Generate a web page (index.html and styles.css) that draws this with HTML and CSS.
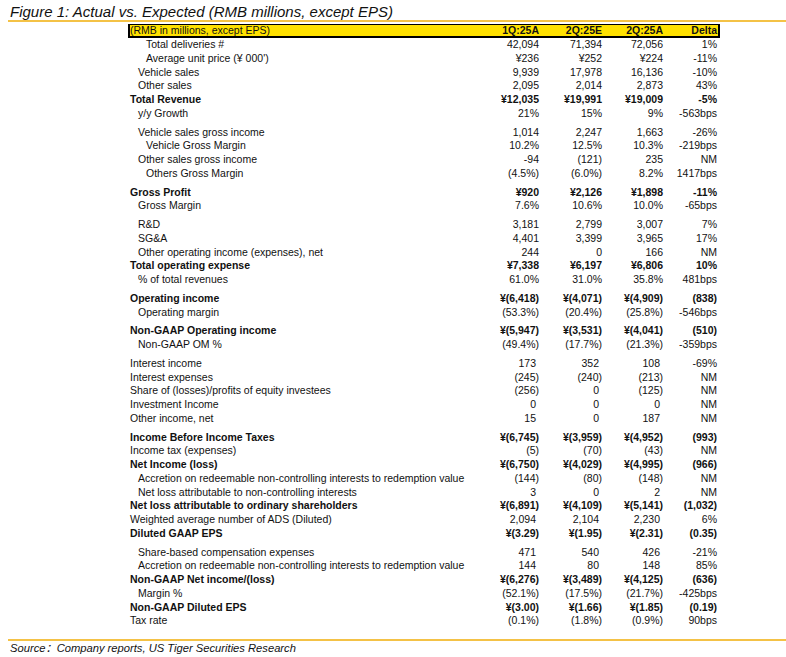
FILE: index.html
```html
<!DOCTYPE html>
<html>
<head>
<meta charset="utf-8">
<link rel="stylesheet" href="styles.css">
</head>
<body>
<div class="fig-title">Figure 1: Actual vs. Expected (RMB millions, except EPS)</div>
<div class="tbl">
  <div class="row head"><span class="lbl">(RMB in millions, except EPS)</span><span>1Q:25A</span><span>2Q:25E</span><span>2Q:25A</span><span>Delta</span></div>

  <div class="row"><span class="lbl l2">Total deliveries #</span><span>42,094</span><span>71,394</span><span>72,056</span><span>1%</span></div>
  <div class="row"><span class="lbl l2">Average unit price (¥ 000')</span><span>¥236</span><span>¥252</span><span>¥224</span><span>-11%</span></div>
  <div class="row"><span class="lbl l1">Vehicle sales</span><span>9,939</span><span>17,978</span><span>16,136</span><span>-10%</span></div>
  <div class="row"><span class="lbl l1">Other sales</span><span>2,095</span><span>2,014</span><span>2,873</span><span>43%</span></div>
  <div class="row b"><span class="lbl">Total Revenue</span><span>¥12,035</span><span>¥19,991</span><span>¥19,009</span><span>-5%</span></div>
  <div class="row"><span class="lbl l1">y/y Growth</span><span>21%</span><span>15%</span><span>9%</span><span>-563bps</span></div>

  <div class="row gap"><span class="lbl l1">Vehicle sales gross income</span><span>1,014</span><span>2,247</span><span>1,663</span><span>-26%</span></div>
  <div class="row"><span class="lbl l2">Vehicle Gross Margin</span><span>10.2%</span><span>12.5%</span><span>10.3%</span><span>-219bps</span></div>
  <div class="row"><span class="lbl l1">Other sales gross income</span><span>-94</span><span>(121)</span><span>235</span><span>NM</span></div>
  <div class="row"><span class="lbl l2">Others Gross Margin</span><span>(4.5%)</span><span>(6.0%)</span><span>8.2%</span><span>1417bps</span></div>

  <div class="row gap b"><span class="lbl">Gross Profit</span><span>¥920</span><span>¥2,126</span><span>¥1,898</span><span>-11%</span></div>
  <div class="row"><span class="lbl l1">Gross Margin</span><span>7.6%</span><span>10.6%</span><span>10.0%</span><span>-65bps</span></div>

  <div class="row gap"><span class="lbl l1">R&amp;D</span><span>3,181</span><span>2,799</span><span>3,007</span><span>7%</span></div>
  <div class="row"><span class="lbl l1">SG&amp;A</span><span>4,401</span><span>3,399</span><span>3,965</span><span>17%</span></div>
  <div class="row"><span class="lbl l1">Other operating income (expenses), net</span><span>244</span><span>0</span><span>166</span><span>NM</span></div>
  <div class="row b"><span class="lbl">Total operating expense</span><span>¥7,338</span><span>¥6,197</span><span>¥6,806</span><span>10%</span></div>
  <div class="row"><span class="lbl l1">% of total revenues</span><span>61.0%</span><span>31.0%</span><span>35.8%</span><span>481bps</span></div>

  <div class="row gap b"><span class="lbl">Operating income</span><span>¥(6,418)</span><span>¥(4,071)</span><span>¥(4,909)</span><span>(838)</span></div>
  <div class="row"><span class="lbl l1">Operating margin</span><span>(53.3%)</span><span>(20.4%)</span><span>(25.8%)</span><span>-546bps</span></div>

  <div class="row gap b"><span class="lbl">Non-GAAP Operating income</span><span>¥(5,947)</span><span>¥(3,531)</span><span>¥(4,041)</span><span>(510)</span></div>
  <div class="row"><span class="lbl l1">Non-GAAP OM %</span><span>(49.4%)</span><span>(17.7%)</span><span>(21.3%)</span><span>-359bps</span></div>

  <div class="row gap"><span class="lbl">Interest income</span><span class="p">173</span><span class="p">352</span><span class="p">108</span><span>-69%</span></div>
  <div class="row"><span class="lbl">Interest expenses</span><span>(245)</span><span>(240)</span><span>(213)</span><span>NM</span></div>
  <div class="row"><span class="lbl">Share of (losses)/profits of equity investees</span><span>(256)</span><span class="p">0</span><span>(125)</span><span>NM</span></div>
  <div class="row"><span class="lbl">Investment Income</span><span class="p">0</span><span class="p">0</span><span class="p">0</span><span>NM</span></div>
  <div class="row"><span class="lbl">Other income, net</span><span class="p">15</span><span class="p">0</span><span class="p">187</span><span>NM</span></div>

  <div class="row gap b"><span class="lbl">Income Before Income Taxes</span><span>¥(6,745)</span><span>¥(3,959)</span><span>¥(4,952)</span><span>(993)</span></div>
  <div class="row"><span class="lbl">Income tax (expenses)</span><span>(5)</span><span>(70)</span><span>(43)</span><span>NM</span></div>
  <div class="row b"><span class="lbl">Net Income (loss)</span><span>¥(6,750)</span><span>¥(4,029)</span><span>¥(4,995)</span><span>(966)</span></div>
  <div class="row"><span class="lbl l1">Accretion on redeemable non-controlling interests to redemption value</span><span>(144)</span><span>(80)</span><span>(148)</span><span>NM</span></div>
  <div class="row"><span class="lbl l1">Net loss attributable to non-controlling interests</span><span class="p">3</span><span class="p">0</span><span class="p">2</span><span>NM</span></div>
  <div class="row b"><span class="lbl">Net loss attributable to ordinary shareholders</span><span>¥(6,891)</span><span>¥(4,109)</span><span>¥(5,141)</span><span>(1,032)</span></div>
  <div class="row"><span class="lbl">Weighted average number of ADS (Diluted)</span><span class="p">2,094</span><span class="p">2,104</span><span class="p">2,230</span><span>6%</span></div>
  <div class="row b"><span class="lbl">Diluted GAAP EPS</span><span>¥(3.29)</span><span>¥(1.95)</span><span>¥(2.31)</span><span>(0.35)</span></div>

  <div class="row gap"><span class="lbl l1">Share-based compensation expenses</span><span class="p">471</span><span class="p">540</span><span class="p">426</span><span>-21%</span></div>
  <div class="row"><span class="lbl l1">Accretion on redeemable non-controlling interests to redemption value</span><span class="p">144</span><span class="p">80</span><span class="p">148</span><span>85%</span></div>
  <div class="row b"><span class="lbl">Non-GAAP Net income/(loss)</span><span>¥(6,276)</span><span>¥(3,489)</span><span>¥(4,125)</span><span>(636)</span></div>
  <div class="row"><span class="lbl l1">Margin %</span><span>(52.1%)</span><span>(17.5%)</span><span>(21.7%)</span><span>-425bps</span></div>
  <div class="row b"><span class="lbl">Non-GAAP Diluted EPS</span><span>¥(3.00)</span><span>¥(1.66)</span><span>¥(1.85)</span><span>(0.19)</span></div>
  <div class="row"><span class="lbl">Tax rate</span><span>(0.1%)</span><span>(1.8%)</span><span>(0.9%)</span><span>90bps</span></div>
</div>
<div class="fig-source">Source：Company reports, US Tiger Securities Research</div>
</body>
</html>
```

FILE: styles.css
```css
html, body {
  margin: 0;
  padding: 0;
  background: #ffffff;
}

body {
  font-family: "Liberation Sans", Arial, "Noto Sans CJK SC", sans-serif;
  color: #111111;
  width: 786px;
}

.fig-title {
  margin-left: 8px;
  padding: 3px 0 0 2px;
  height: 17px;
  line-height: 17px;
  font-size: 15px;
  font-style: italic;
  border-bottom: 2px solid #f4c246;
}

.tbl {
  margin: 2px 0 0 128px;
  width: 592px;
  font-size: 10.5px;
}

.row {
  display: grid;
  grid-template-columns: 348px 61px 63px 61px 54px;
  height: 13.75px;
  line-height: 13.75px;
  padding: 0 3px 0 2px;
  white-space: nowrap;
}

.row > span {
  text-align: right;
}

.row > span.lbl {
  text-align: left;
  overflow: visible;
}

.row > span.p {
  padding-right: 3px;
}

.lbl.l1 {
  padding-left: 8px;
}

.lbl.l2 {
  padding-left: 16px;
}

.row.b {
  font-weight: bold;
}

.row.gap {
  margin-top: 5px;
}

.row.head {
  box-sizing: border-box;
  height: 14px;
  line-height: 11px;
  padding: 0 1px 0 0;
  background: #ffe100;
  border-top: 1px solid #000000;
  border-left: 2px solid #000000;
  border-right: 2px solid #000000;
  border-bottom: 2px solid #000000;
  font-size: 10.5px;
}

.row.head > span {
  font-weight: bold;
}

.row.head > span.lbl {
  font-weight: normal;
}

.fig-source {
  margin: 11px 0 0 8px;
  border-top: 2px solid #f4c246;
  padding: 1px 0 0 2px;
  line-height: 13px;
  font-size: 11.2px;
  font-style: italic;
}
```
